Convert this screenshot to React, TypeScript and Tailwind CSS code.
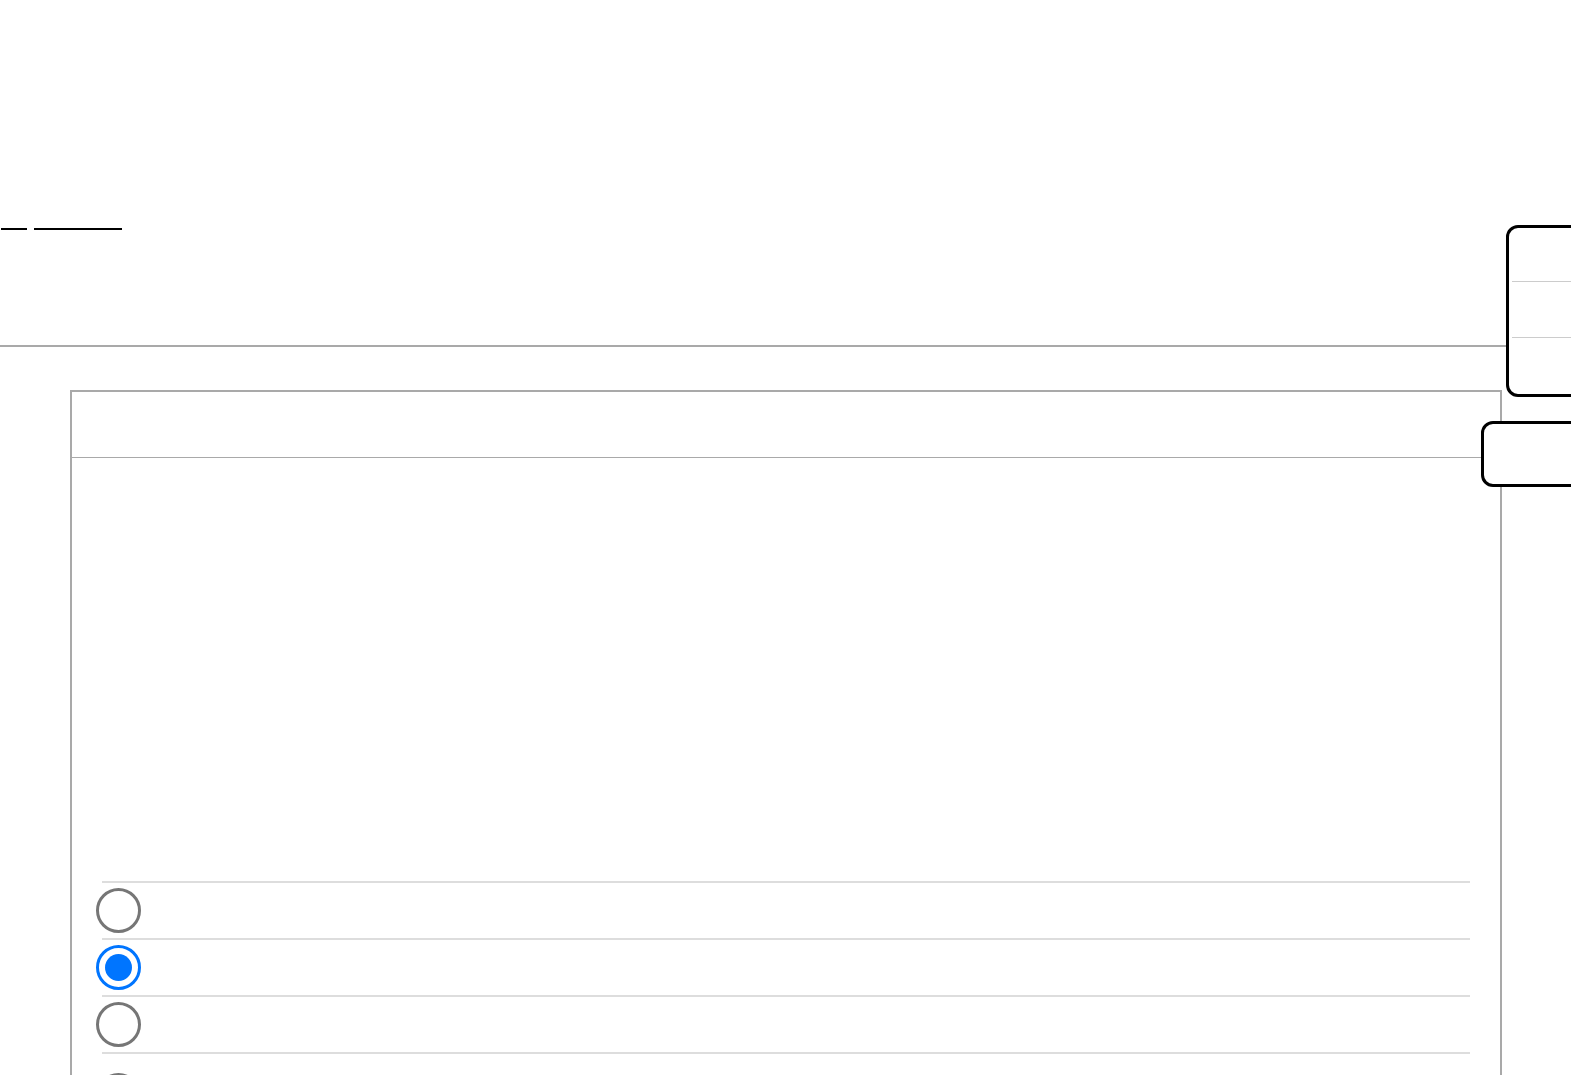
import React from "react";

const options = [
  { id: "a", checked: false, tall: false },
  { id: "b", checked: true, tall: false },
  { id: "c", checked: false, tall: false },
  { id: "d", checked: false, tall: true },
];

function Radio({ checked }: { checked: boolean }) {
  if (checked) {
    return (
      <span className="-ml-[6px] flex h-[45px] w-[45px] shrink-0 items-center justify-center rounded-full border-[3px] border-[#0075ff] bg-white">
        <span className="h-[27px] w-[27px] rounded-full bg-[#0075ff]" />
      </span>
    );
  }
  return (
    <span className="-ml-[6px] block h-[45px] w-[45px] shrink-0 rounded-full border-[3px] border-[#767676] bg-white" />
  );
}

export default function App() {
  return (
    <div className="relative min-h-[1200px] overflow-hidden bg-white font-['Liberation_Sans',sans-serif]">
      {/* Header */}
      <div className="h-[345px]">
        <div className="flex gap-[7px] pl-px pt-[228px]">
          <span className="block w-[26px] border-b-2 border-black" />
          <span className="block w-[88px] border-b-2 border-black" />
        </div>
      </div>
      <div className="h-[2px] w-full bg-[#a9a9a9]" />

      {/* Main panel */}
      <div className="ml-[70px] mt-[43px] w-[1432px] border-2 border-[#a9a9a9]">
        <div className="h-[66px] border-b border-[#a9a9a9]" />
        <div className="px-[30px] pt-[423px]">
          <ul className="border-t-2 border-[#dddddd]">
            {options.map((o) => (
              <li
                key={o.id}
                className={
                  o.tall
                    ? "flex h-[84px] items-center border-b-2 border-[#dddddd]"
                    : "flex h-[57px] items-center border-b-2 border-[#dddddd]"
                }
              >
                <Radio checked={o.checked} />
              </li>
            ))}
          </ul>
        </div>
      </div>

      {/* Menu overlay */}
      <div className="absolute left-[1506px] top-[225px] w-[200px] rounded-[12px] border-[3px] border-black bg-white pl-[3px]">
        <div className="h-[54px] border-b border-[#cccccc]" />
        <div className="h-[56px] border-b border-[#cccccc]" />
        <div className="h-[56px]" />
      </div>

      {/* Small button overlay */}
      <div className="absolute left-[1481px] top-[421px] h-[66px] w-[200px] rounded-[12px] border-[3px] border-black bg-white" />
    </div>
  );
}
